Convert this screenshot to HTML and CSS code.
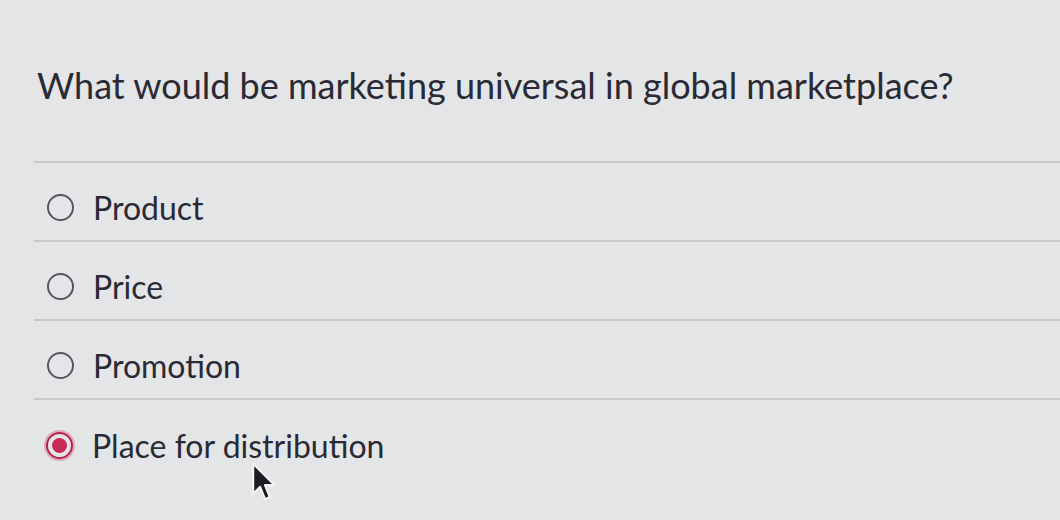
FILE: index.html
```html
<!DOCTYPE html>
<html lang="en">
<head>
<meta charset="utf-8">
<title>Quiz question</title>
<link rel="stylesheet" href="styles.css">
</head>
<body>
<div class="quiz">
  <div class="question">What would be marketing universal in global marketplace?</div>
  <div class="option"><span class="radio"></span><span class="label">Product</span></div>
  <div class="option"><span class="radio"></span><span class="label">Price</span></div>
  <div class="option"><span class="radio"></span><span class="label">Promotion</span></div>
  <div class="option last"><span class="radio checked"></span><span class="label">Place for distribution</span></div>
</div>
<svg class="cursor" width="28" height="44" viewBox="0 0 26 40">
  <path d="M2 2 L2 30 L8.5 23.5 L13 35 L17.5 33 L13 22 L22 22 Z" fill="#1d1d22" stroke="#f4f4f4" stroke-width="2" stroke-linejoin="round"/>
</svg>
</body>
</html>
```
FILE: styles.css
```css
html, body {
  margin: 0;
  padding: 0;
  background: #e3e5e6;
  font-family: Lato, "Open Sans", sans-serif;
  color: #2a2a35;
  overflow: hidden;
}
.quiz {
  padding-left: 34px;
  width: 1026px;
}
.question {
  font-size: 36px;
  line-height: 40px;
  padding: 65px 0 0 3px;
  height: 96px;
  border-bottom: 2px solid #c6c8ca;
}
.option {
  display: flex;
  align-items: center;
  padding-top: 12px;
  box-sizing: border-box;
  height: 79px;
  border-bottom: 2px solid #c6c8ca;
}
.option.last {
  border-bottom: none;
}
.radio {
  flex: none;
  width: 23px;
  height: 23px;
  border: 2px solid #56575d;
  border-radius: 50%;
  margin-left: 13px;
  margin-right: 19px;
  position: relative;
}
.radio.checked {
  border-color: #b8204a;
  box-shadow: 0 0 0 2px rgba(210, 60, 100, 0.35);
  margin-left: 12px;
  margin-right: 19px;
}
.radio.checked::after {
  content: "";
  position: absolute;
  left: 4px;
  top: 4px;
  width: 15px;
  height: 15px;
  border-radius: 50%;
  background: #c82a55;
}
.label {
  font-size: 32px;
  line-height: 36px;
}
.cursor {
  position: absolute;
  left: 251px;
  top: 461px;
}
```
